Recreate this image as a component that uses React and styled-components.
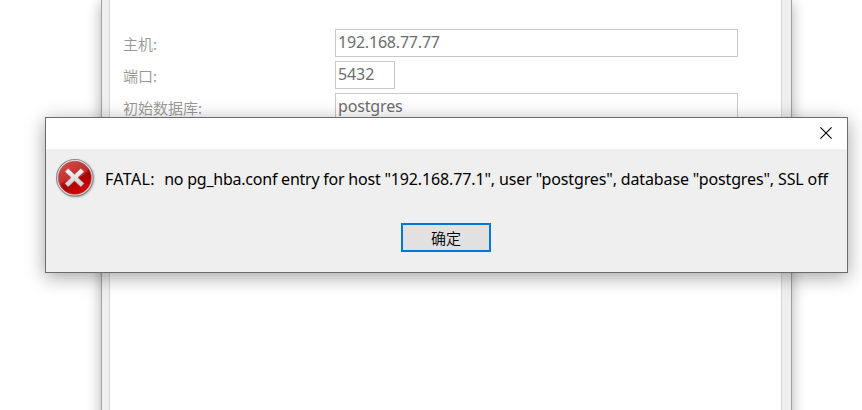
import React from "react";
import styled, { createGlobalStyle } from "styled-components";

const GlobalStyle = createGlobalStyle`
  * { box-sizing: border-box; }
  body {
    margin: 0;
    overflow: hidden;
    background: #fff;
    font-family: "Noto Sans", "Noto Sans CJK SC", sans-serif;
    font-size: 16px;
  }
`;

const Desktop = styled.main`
  position: relative;
  width: 862px;
  height: 410px;
  overflow: hidden;
  background: #fff;
`;

const SettingsWindow = styled.section`
  width: 691px;
  height: 440px;
  margin-left: 101px;
  padding: 0 9px 0 7px;
  background: #efefef;
  border: solid #a0a0a0;
  border-width: 0 1px;
  box-shadow: 0 3px 13px rgba(0, 0, 0, 0.32);
`;

const SettingsPage = styled.div`
  display: flex;
  flex-direction: column;
  gap: 4px;
  height: 100%;
  padding: 29px 0 0 13px;
  background: #fff;
  border: solid #d6d6d6;
  border-width: 0 1px;
`;

const Field = styled.div`
  display: grid;
  grid-template-columns: 212px 1fr;
  height: 28px;
`;

const Label = styled.label`
  color: #979797;
  font-family: "Noto Sans CJK SC", sans-serif;
  font-size: 15px;
  font-weight: 350;
  line-height: 30px;
`;

const Value = styled.div`
  width: ${(p) => p.$width}px;
  height: 28px;
  padding-left: 2px;
  border: 1px solid #c8c8c8;
  color: #6d6d6d;
  line-height: 25px;
  letter-spacing: ${(p) => p.$tracking};
`;

const Dialog = styled.section`
  position: absolute;
  left: 45px;
  top: 117px;
  width: 803px;
  height: 156px;
  background: #efefef;
  border: 1px solid #6b6b6b;
  box-shadow: 0 4px 18px rgba(0, 0, 0, 0.36);
`;

const TitleBar = styled.header`
  display: flex;
  justify-content: flex-end;
  height: 31px;
  padding: 9px 15px 0 0;
  background: #fff;
`;

const CloseButton = styled.button`
  width: 12px;
  height: 12px;
  padding: 0;
  border: 0;
  background: none;
  svg { display: block; }
`;

const MessageRow = styled.div`
  display: flex;
  height: 74px;
  padding: 8px 0 0 8px;
  svg { flex: none; }
`;

const Message = styled.p`
  margin: 0 0 0 9px;
  color: #000;
  line-height: 20px;
  padding-top: 12px;
  white-space: pre;
`;

const Phrase = styled.span`
  letter-spacing: ${(p) => p.$tracking};
`;

const Actions = styled.footer`
  display: flex;
  padding-left: 355px;
`;

const ConfirmButton = styled.button`
  width: 90px;
  height: 29px;
  padding: 0;
  border: 2px solid #0078d7;
  background: #e1e1e1;
  color: #000;
  font-family: "Noto Sans CJK SC", sans-serif;
  font-size: 15px;
  font-weight: 350;
  line-height: 24px;
`;

function ErrorIcon() {
  return (
    <svg width="42" height="42" viewBox="0 0 42 42" aria-hidden="true">
      <defs>
        <linearGradient id="rim" x1="0" y1="0" x2="1" y2="1">
          <stop offset="0" stopColor="#7b7b7b" />
          <stop offset=".5" stopColor="#999" />
          <stop offset="1" stopColor="#777" />
        </linearGradient>
        <linearGradient id="red" x1=".2" y1="0" x2=".75" y2="1">
          <stop offset="0" stopColor="#d03636" />
          <stop offset=".48" stopColor="#b81414" />
          <stop offset=".6" stopColor="#a80303" />
          <stop offset="1" stopColor="#e00606" />
        </linearGradient>
        <linearGradient id="gloss" x1="0" y1="0" x2=".5" y2="1">
          <stop offset="0" stopColor="#fff" stopOpacity=".09" />
          <stop offset="1" stopColor="#fff" stopOpacity=".13" />
        </linearGradient>
        <linearGradient id="cross" x1="0" y1="0" x2="0" y2="1">
          <stop offset="0" stopColor="#f4f4f4" />
          <stop offset=".5" stopColor="#e2e2e2" />
          <stop offset="1" stopColor="#d0d0d0" />
        </linearGradient>
        <filter id="soft" x="-20%" y="-20%" width="140%" height="140%">
          <feGaussianBlur stdDeviation=".8" />
        </filter>
      </defs>
      <circle cx="21.7" cy="21.7" r="18.6" fill="#777" opacity=".55" filter="url(#soft)" />
      <circle cx="20.8" cy="20.8" r="18.3" fill="#e8e8e8" stroke="url(#rim)" strokeWidth="1.1" />
      <circle cx="20.8" cy="20.8" r="16.5" fill="url(#red)" stroke="#a72b2b" strokeWidth=".6" />
      <path d="M5.5 27A16.3 16.3 0 0 1 34.5 11.8Q30 20 20 22Q11 23.7 5.5 27Z" fill="url(#gloss)" />
      <path d="m14.2 11.3 6.3 5.9 6.3-5.9 3.4 3.4-6.2 5.9 6.2 5.9-3.4 3.4-6.3-5.9-6.3 5.9-3.4-3.4 6.2-5.9-6.2-5.9Z" fill="url(#cross)" stroke="#ad4b4b" strokeWidth=".6" strokeLinejoin="round" />
    </svg>
  );
}

export default function App() {
  return (
    <>
      <GlobalStyle />
      <Desktop>
        <SettingsWindow>
          <SettingsPage>
            <Field><Label>主机:</Label><Value $width={403} $tracking="-0.2px">192.168.77.77</Value></Field>
            <Field><Label>端口:</Label><Value $width={60} $tracking="-0.1px">5432</Value></Field>
            <Field><Label>初始数据库:</Label><Value $width={403} $tracking="-0.15px">postgres</Value></Field>
          </SettingsPage>
        </SettingsWindow>
        <Dialog role="alertdialog">
          <TitleBar>
            <CloseButton aria-label="关闭">
              <svg width="12" height="12" viewBox="0 0 12 12">
                <path d="m.4.4 11.2 11.2m0-11.2L.4 11.6" fill="none" stroke="#000" strokeWidth="1.15" />
              </svg>
            </CloseButton>
          </TitleBar>
          <MessageRow>
            <ErrorIcon />
            <Message>
              <Phrase $tracking="0.38px">{"FATAL:  "}</Phrase>
              <Phrase $tracking="-0.23px">{"no pg_hba.conf entry for host "}</Phrase>
              <Phrase $tracking="-0.135px">{'"192.168.77.1", user "postgres", database "postgres", SSL off'}</Phrase>
            </Message>
          </MessageRow>
          <Actions><ConfirmButton>确定</ConfirmButton></Actions>
        </Dialog>
      </Desktop>
    </>
  );
}
